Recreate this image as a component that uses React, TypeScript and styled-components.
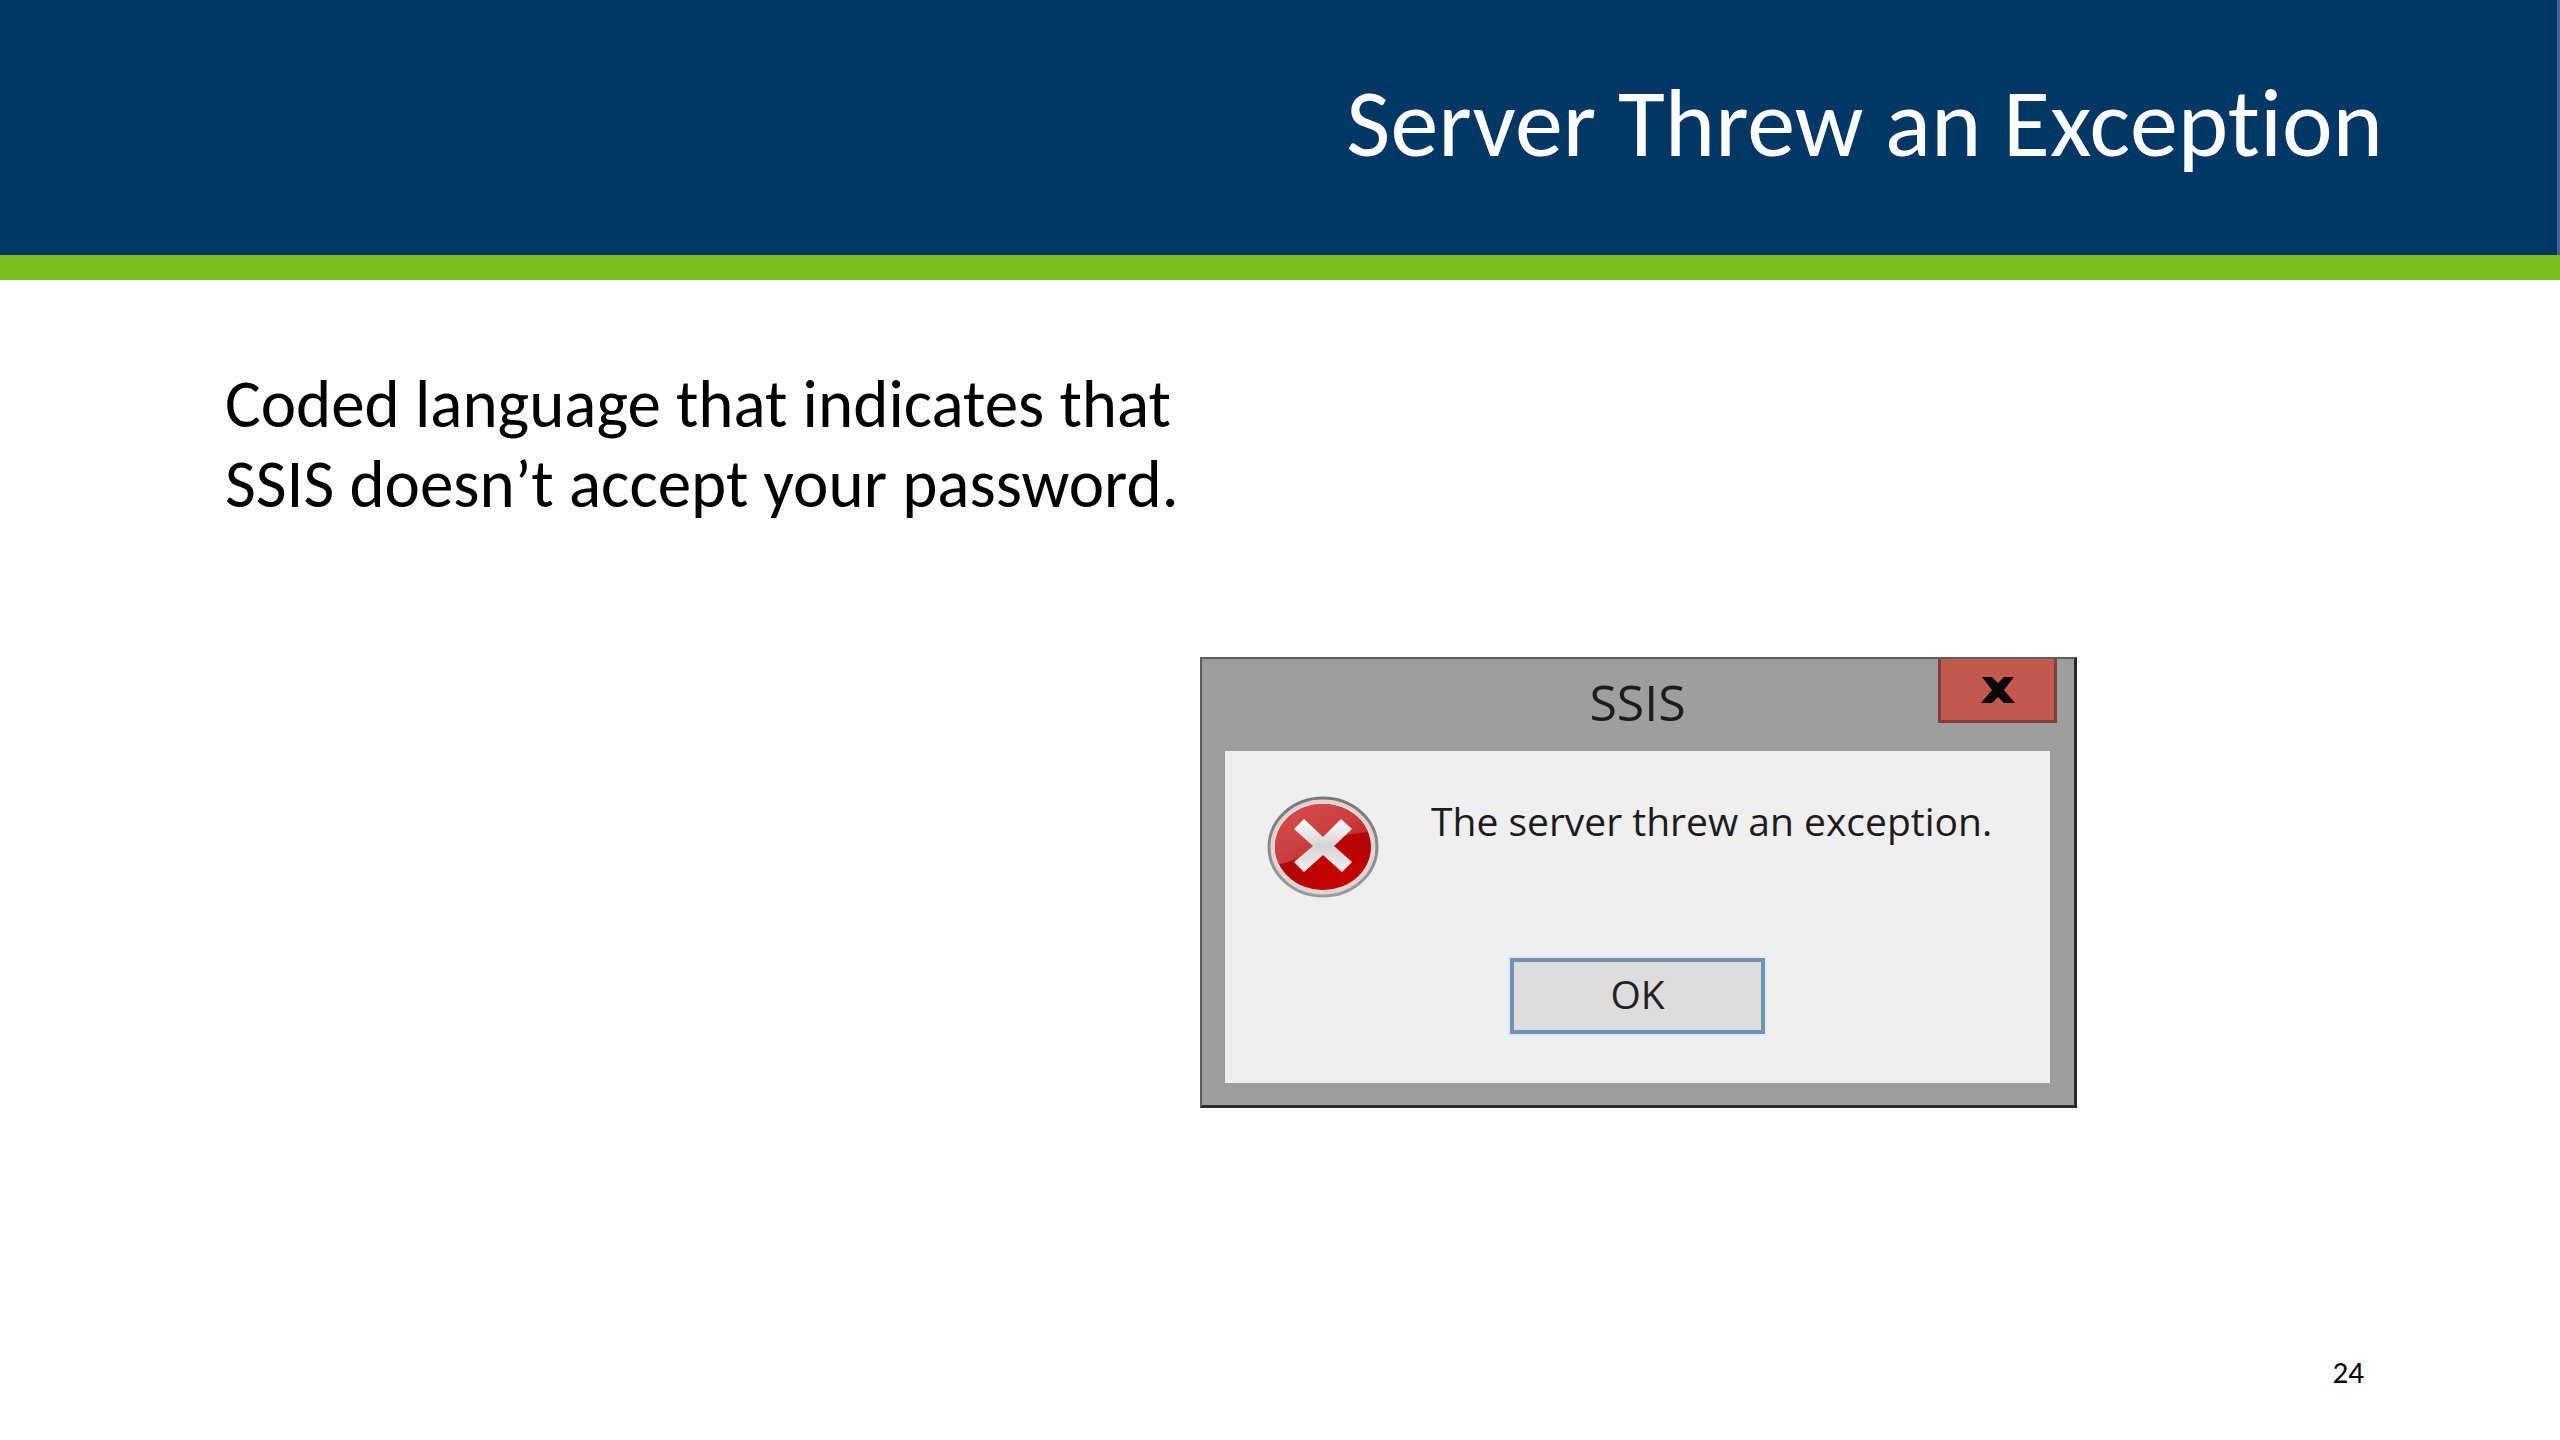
import React from "react";
import styled, { createGlobalStyle } from "styled-components";

const slideFont = `Carlito, Lato, "Open Sans", sans-serif`;
const windowFont = `"Open Sans", "Noto Sans", sans-serif`;

const GlobalStyle = createGlobalStyle`
  *, *::before, *::after { box-sizing: border-box; }
  body { margin: 0; background: #fefefe; }
`;

const Slide = styled.main`
  display: flex;
  flex-direction: column;
  min-height: 100vh;
  color: #000;
  font-family: ${slideFont};
  font-variant-ligatures: none;
`;

const Banner = styled.header`
  padding: 74px 174px 81px;
  border-right: 3px solid #46688a;
  background: #003764;
  text-align: right;
`;

const Title = styled.h1`
  margin: 0;
  color: #fff;
  font-size: 96px;
  font-weight: 400;
  line-height: 100px;
`;

const Stripe = styled.div`
  height: 25px;
  background: #78be20;
`;

const Content = styled.section`
  display: flex;
  flex-direction: column;
  flex: 1;
  padding: 84px 196px 48px 225px;
`;

const Statement = styled.p`
  max-width: 960px;
  margin: 0;
  font-size: 67px;
  line-height: 80px;
`;

const Dialog = styled.section`
  display: flex;
  flex-direction: column;
  align-self: flex-end;
  width: 877px;
  max-width: 100%;
  margin: 133px 287px 40px 0;
  padding: 0 24px 22px 23px;
  border: 2px solid #5f5f5f;
  border-right: 3px solid #262626;
  border-bottom: 3px solid #2b2b2b;
  background: #9e9e9e;
  color: #1c1c1c;
  font-family: ${windowFont};
`;

const TitleBar = styled.div`
  display: grid;
  grid-template-columns: 1fr auto 1fr;
  align-items: start;
  height: 92px;
`;

const DialogTitle = styled.h2`
  grid-column: 2;
  margin: 0;
  padding-top: 9px;
  font-size: 50px;
  font-weight: 400;
  line-height: 68px;
`;

const CloseButton = styled.button`
  display: flex;
  align-items: center;
  justify-content: center;
  justify-self: end;
  width: 119px;
  height: 64px;
  margin-right: -7px;
  padding: 0;
  border: 3px solid #7b403b;
  border-top: 0;
  background: #c1594c;
`;

const Panel = styled.div`
  display: flex;
  flex-direction: column;
  align-items: center;
  padding: 45px 42px 49px;
  background: #efefef;
`;

const MessageRow = styled.div`
  display: flex;
  align-items: flex-start;
  align-self: stretch;
  gap: 52px;
  margin-bottom: 60px;
`;

const Message = styled.p`
  margin: 0;
  font-size: 39px;
  line-height: 50px;
  white-space: nowrap;
`;

const OkButton = styled.button`
  width: 255px;
  height: 76px;
  padding: 0 0 4px;
  border: 4px solid #6f93b0;
  outline: 2px solid #dcebf5;
  background: #dddddd;
  color: #222;
  font-family: ${windowFont};
  font-size: 39px;
  line-height: 50px;
`;

const SlideNumber = styled.footer`
  margin-top: auto;
  font-size: 31px;
  line-height: 40px;
  text-align: right;
`;

const ErrorIcon = () => (
  <svg width="112" height="102" viewBox="0 0 112 102" role="img" aria-label="Error">
    <defs>
      <linearGradient id="rim" x1="0" y1="0" x2="0" y2="1">
        <stop offset="0" stopColor="#777" />
        <stop offset="1" stopColor="#9c9c9c" />
      </linearGradient>
      <radialGradient id="base" cx="0.65" cy="0.85" r="0.8">
        <stop offset="0" stopColor="#c80400" />
        <stop offset="0.5" stopColor="#b80306" />
        <stop offset="1" stopColor="#a60d10" />
      </radialGradient>
      <linearGradient id="gloss" x1="0" y1="0" x2="1" y2="1">
        <stop offset="0" stopColor="#d85450" />
        <stop offset="0.5" stopColor="#cc4040" />
        <stop offset="1" stopColor="#b81818" />
      </linearGradient>
      <linearGradient id="cross" x1="0" y1="0" x2="0" y2="1">
        <stop offset="0" stopColor="#fff" />
        <stop offset="0.5" stopColor="#d4d4d4" />
        <stop offset="1" stopColor="#f2f2f2" />
      </linearGradient>
      <clipPath id="disc">
        <ellipse cx="56" cy="51" rx="48" ry="43" />
      </clipPath>
    </defs>
    <ellipse cx="56" cy="51" rx="54" ry="49" fill="#f3d4d1" stroke="url(#rim)" strokeWidth="3" />
    <ellipse cx="56" cy="51" rx="51" ry="46" fill="none" stroke="#d5d5d5" strokeWidth="2" />
    <ellipse cx="56" cy="51" rx="48" ry="43" fill="url(#base)" />
    <path
      d="M0 0H112V36C84 35 68 42 53 50C38 58 28 66 12 68L0 66Z"
      fill="url(#gloss)"
      clipPath="url(#disc)"
    />
    <path
      d="M37 23L56 41L74 23L85 33L67 50L85 66L75 76L56 59L37 76L27 66L46 50L27 33Z"
      fill="url(#cross)"
    />
  </svg>
);

const CloseIcon = () => (
  <svg width="34" height="26" viewBox="0 0 34 26" aria-hidden="true">
    <path
      d="M1 0H11L17 6L23 0H33L23 13L34 26H23L17 20L11 26H0L11 13Z"
      fill="#0b0605"
    />
  </svg>
);

export default function App() {
  return (
    <>
      <GlobalStyle />
      <Slide>
        <Banner>
          <Title>Server Threw an Exception</Title>
        </Banner>
        <Stripe />
        <Content>
          <Statement>
            Coded language that indicates that SSIS doesn’t accept your password.
          </Statement>
          <Dialog role="dialog" aria-labelledby="dialog-title">
            <TitleBar>
              <DialogTitle id="dialog-title">SSIS</DialogTitle>
              <CloseButton type="button" aria-label="Close">
                <CloseIcon />
              </CloseButton>
            </TitleBar>
            <Panel>
              <MessageRow>
                <ErrorIcon />
                <Message>The server threw an exception.</Message>
              </MessageRow>
              <OkButton type="button">OK</OkButton>
            </Panel>
          </Dialog>
          <SlideNumber>24</SlideNumber>
        </Content>
      </Slide>
    </>
  );
}
